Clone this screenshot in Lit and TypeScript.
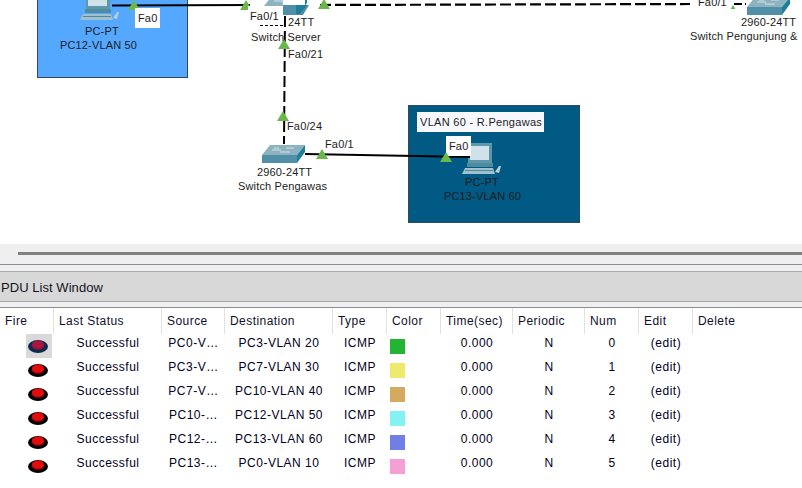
import { LitElement, html, css, svg } from "lit";
import { customElement } from "lit/decorators.js";

const labels: { x: number; y: number; t: string; box?: boolean }[] = [
  { x: 85, y: 24, t: "PC-PT" },
  { x: 60, y: 38, t: "PC12-VLAN 50" },
  { x: 138, y: 8, t: "Fa0", box: true },
  { x: 250, y: 9, t: "Fa0/1" },
  { x: 288, y: 15, t: "24TT" },
  { x: 251, y: 30, t: "Switch Server" },
  { x: 288, y: 47, t: "Fa0/21" },
  { x: 287, y: 119, t: "Fa0/24" },
  { x: 257, y: 165, t: "2960-24TT" },
  { x: 238, y: 179, t: "Switch Pengawas" },
  { x: 325, y: 137, t: "Fa0/1" },
  { x: 449, y: 136, t: "Fa0", box: true },
  { x: 465, y: 175, t: "PC-PT" },
  { x: 444, y: 189, t: "PC13-VLAN 60" },
  { x: 741, y: 15, t: "2960-24TT" },
  { x: 690, y: 29, t: "Switch Pengunjung &" },
  { x: 698, y: -8, t: "Fa0/1", box: true },
];

const swInner = (x: number, y: number) => svg`
  <g transform="translate(${x} ${y})">
    <polygon points="0,10 8,0 43,0 35,10" fill="#8db3c1"/>
    <polygon points="0,10 35,10 35,18 0,18" fill="#4f8fa8"/>
    <polygon points="35,10 43,0 43,7 35,18" fill="#1f7f99"/>
    <path d="M10 5h9M24 3h8M18 7h10M12 3h5" stroke="#d3e2e8" stroke-width="1" fill="none"/>
  </g>`;

const pc = (x: number, y: number) => svg`
  <g transform="translate(${x} ${y})">
    <polygon points="6,0 30,0 30,20 6,20" fill="#5f97aa"/>
    <rect x="8" y="3" width="19" height="14" fill="#cfe2ea"/>
    <polygon points="5,20 31,20 31,24 5,24" fill="#4e8aa0"/>
    <polygon points="3,25 31,25 33,31 0,31" fill="#9fc0cc"/>
    <rect x="3" y="27" width="28" height="1" fill="#4e8aa0"/>
    <polygon points="33,29 37,23 39,23 37,30" fill="#b9ced6"/>
  </g>`;

const tri = (x: number, y: number, s = 1) => svg`
  <polygon points="${x - 6 * s},${y + 5 * s} ${x + 6 * s},${y + 5 * s} ${x},${y - 5 * s}" fill="#6ab84a"/>`;

const rows = [
  ["PC0-V…", "PC3-VLAN 20", "#22b533", "0"],
  ["PC3-V…", "PC7-VLAN 30", "#eeea6e", "1"],
  ["PC7-V…", "PC10-VLAN 40", "#d4aa5f", "2"],
  ["PC10-…", "PC12-VLAN 50", "#84f1f5", "3"],
  ["PC12-…", "PC13-VLAN 60", "#6f7fe5", "4"],
  ["PC13-…", "PC0-VLAN 10", "#f5a0d5", "5"],
];
const heads = ["Fire", "Last Status", "Source", "Destination", "Type", "Color", "Time(sec)", "Periodic", "Num", "Edit", "Delete"];

@customElement("app-root")
export class AppRoot extends LitElement {
  static styles = css`
    :host { display: block; width: 802px; height: 488px; overflow: hidden; background: #fff;
      font-family: "Liberation Sans", Arial, sans-serif; }
    .canvas { position: relative; height: 244px; overflow: hidden; background: #fff; }
    .zone { position: absolute; box-sizing: border-box; border: 1px solid #33485a; }
    .z1 { left: 37px; top: -40px; width: 151px; height: 118px; background: #55a8ff; }
    .z2 { left: 408px; top: 105px; width: 172px; height: 118px; background: #005a84; }
    .links { position: absolute; inset: 0; width: 802px; height: 244px; }
    .lb { position: absolute; font-size: 11px; line-height: 14px; letter-spacing: 0.15px; color: #1c1c1c; white-space: nowrap; }
    .lb.box { background: #fff; padding: 3px 3px; }
    .note { position: absolute; left: 417px; top: 112px; width: 127px; height: 20px; box-sizing: border-box;
      background: #f8f8ff; font-size: 11px; line-height: 20px; padding-left: 3px; letter-spacing: 0.3px; color: #1c1c1c; white-space: nowrap; }
    .strip { height: 20px; background: #efefef; display: flex; align-items: center; padding-left: 18px; }
    .bar { height: 3px; flex: 1; background: #808080; margin-top: -1px; }
    .rule { height: 6px; background: #efefef; border-top: 1px solid #8c8c94; }
    .title { height: 29px; background: #d8d8d8; border-top: 1px solid #a8a8ae; border-bottom: 1px solid #a8a8ae;
      font-size: 13px; line-height: 31px; padding-left: 1px; color: #14141f; letter-spacing: 0.05px; }
    .gap { height: 5px; background: #efefef; border-bottom: 1px solid #8c8c94; }
    .grid { display: grid; grid-template-columns: 54px 108px 63px 108px 54px 54px 72px 72px 54px 54px 1fr; }
    .h { height: 26px; box-sizing: border-box; border-right: 1px solid #e2e2e2; padding-left: 5px; font-size: 12px; line-height: 27px;
      color: #10102a; letter-spacing: 0.45px; white-space: nowrap; }
    .h:last-child { border-right: none; }
    .c { height: 24px; font-size: 12px; line-height: 16px; padding-bottom: 6px; padding-top: 1px; box-sizing: border-box; text-align: center;
      color: #000020; letter-spacing: 0.5px; white-space: nowrap; }
    .fire { position: relative; padding: 0; }
    .fire svg { position: absolute; left: 26px; top: 0; }
    .sw { padding: 5px 0 0 3px; }
    .sw i { display: block; width: 15px; height: 15px; }
    .rows { background: #fff; }
  `;

  render() {
    return html`
      <div class="canvas">
        <div class="zone z1"></div>
        <div class="zone z2"></div>
        <svg class="links" viewBox="0 0 802 244">
          ${pc(80, -11)}
          ${swInner(264, -4)}
          ${swInner(747, -3)}
          ${swInner(262, 145)}
          ${pc(462, 143)}
          <path d="M112 5.500L250 5" stroke="#000" stroke-width="2" fill="none"/>
          <path d="M320 5L690 4" stroke="#000" stroke-width="2.200" stroke-dasharray="11 4" fill="none"/>
          <path d="M734 4H746" stroke="#000" stroke-width="2" stroke-dasharray="8 3" fill="none"/>
          ${tri(246, 5)}
          <rect x="248" y="6" width="35" height="20" fill="#fff"/>
          <rect x="241" y="10" width="10" height="6" fill="#fff"/>
          <polygon points="283,5 309,5 303,15 283,15" fill="#4f8fa8"/>
          <polygon points="296,5 307,5 300,14 296,14" fill="#1f7f99"/>
          <rect x="283" y="0" width="22" height="5" fill="#fff"/>
          <path d="M285 16L284 144" stroke="#000" stroke-width="2" stroke-dasharray="11 4" fill="none"/>
          <path d="M260 25.500H284" stroke="#000" stroke-width="1.200" stroke-dasharray="3 2" fill="none"/>
          <path d="M305 154L470 157" stroke="#000" stroke-width="2" fill="none"/>
          ${tri(134, 5)} ${tri(324, 4)} ${tri(284, 44)} ${tri(283, 116)} ${tri(322, 154)} ${tri(733, 7, 0.4)}
        </svg>
        ${labels.map(
          (l) => html`<span class="lb ${l.box ? "box" : ""}" style="left:${l.x - (l.box ? 3 : 0)}px;top:${l.y}px">${l.t}</span>`
        )}
        <div class="note">VLAN 60 - R.Pengawas</div>
        <svg class="links" viewBox="0 0 802 244">${tri(446, 157)}</svg>
      </div>
      <div class="strip"><div class="bar"></div></div>
      <div class="rule"></div>
      <div class="title">PDU List Window</div>
      <div class="gap"></div>
      <div class="grid">${heads.map((h) => html`<div class="h">${h}</div>`)}</div>
      <div class="grid rows">
        ${rows.map(
          (r, i) => html`
            <div class="c fire">
              <svg width="26" height="24" viewBox="0 0 26 24">
                ${i === 0 ? svg`<rect width="26" height="24" rx="1" fill="#d9d9d9"/>` : ""}
                <ellipse cx="12" cy="12.500" rx="10" ry="6.500" fill="${i === 0 ? "#0c2a50" : "#000"}"/>
                <ellipse cx="12" cy="11.500" rx="6.500" ry="4.500" fill="${i === 0 ? "#701a38" : "#8a0606"}"/>
                <ellipse cx="12" cy="10.500" rx="6" ry="4" fill="${i === 0 ? "#a8183c" : "#e60a0a"}"/>
              </svg>
            </div>
            <div class="c">Successful</div>
            <div class="c">${r[0]}</div>
            <div class="c">${r[1]}</div>
            <div class="c">ICMP</div>
            <div class="c sw"><i style="background:${r[2]}"></i></div>
            <div class="c">0.000</div>
            <div class="c">N</div>
            <div class="c">${r[3]}</div>
            <div class="c">(edit)</div>
            <div class="c"></div>
          `
        )}
      </div>
    `;
  }
}
